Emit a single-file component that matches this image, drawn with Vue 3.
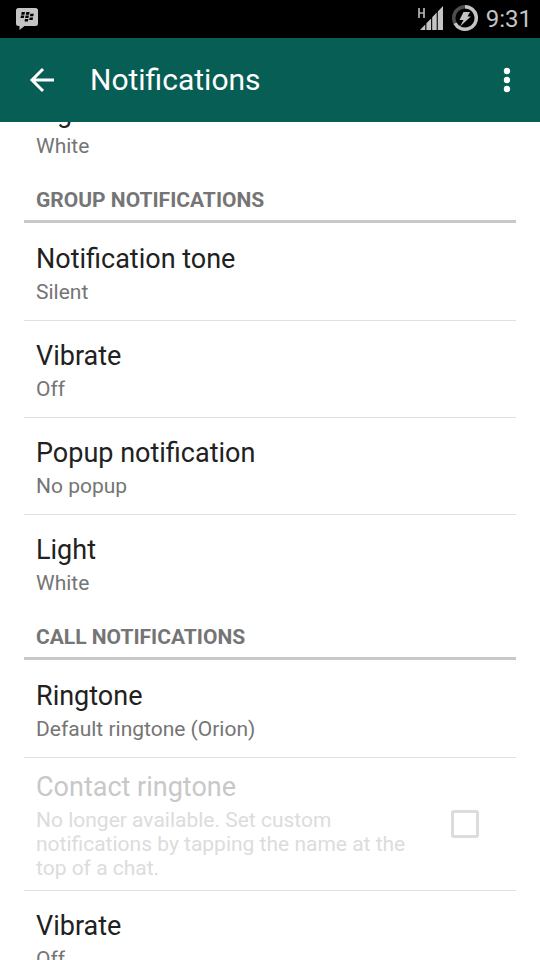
<script setup>
const sections = [
  {
    id: 'message',
    title: '',
    items: [{ id: 'message-light', title: 'Light', summary: 'White' }],
  },
  {
    id: 'group',
    title: 'Group notifications',
    items: [
      { id: 'group-tone', title: 'Notification tone', summary: 'Silent' },
      { id: 'group-vibrate', title: 'Vibrate', summary: 'Off' },
      { id: 'group-popup', title: 'Popup notification', summary: 'No popup' },
      { id: 'group-light', title: 'Light', summary: 'White' },
    ],
  },
  {
    id: 'call',
    title: 'Call notifications',
    items: [
      { id: 'call-ringtone', title: 'Ringtone', summary: 'Default ringtone (Orion)' },
      {
        id: 'call-contact',
        title: 'Contact ringtone',
        summary:
          'No longer available. Set custom notifications by tapping the name at the top of a chat.',
        checkbox: true,
      },
      { id: 'call-vibrate', title: 'Vibrate', summary: 'Off' },
    ],
  },
]
</script>

<template>
  <div class="screen">
    <div class="status">
      <svg width="24" height="24" viewBox="0 0 24 24" aria-hidden="true">
        <path fill="#c4c4c4" d="M3.500 1h17a2.500 2.500 0 0 1 2.500 2.500v13a2.500 2.500 0 0 1-2.500 2.500H9.500L4.500 23V19h-1A2.500 2.500 0 0 1 1 16.500v-13A2.500 2.500 0 0 1 3.500 1z" />
        <path fill="#000" d="M6.700 5h3.300l-.5 2.700H6.200zM11.300 5h3.300l-.5 2.700h-3.300zM6 8.500h3.300l-.5 2.600H5.500zM10.600 8.500h3.300l-.5 2.600h-3.300zM15.400 6.700h3.400l-.5 2.600h-3.400zM14.700 10.500h3.400l-.5 2.600h-3.400zM10 12h3.400l-.5 2.600H9.500z" />
      </svg>
      <div class="tray">
        <svg width="27" height="26" viewBox="0 0 27 26" aria-hidden="true">
          <path fill="none" stroke="#b4b4b4" stroke-width="1.700" d="M2 2v10M7 2v10M2 7h5" />
          <path fill="#c4c4c4" d="M3 24l5.300-5.500V24zM9.400 17.300l4.700-4.900V24H9.400zM15.200 11.300l4.500-4.700V24h-4.500zM20.800 5.400L26 0v24h-5.200z" />
        </svg>
        <svg width="28" height="28" viewBox="0 0 28 28" aria-hidden="true">
          <circle cx="14" cy="13" r="11.300" fill="none" stroke="#4d4d4d" stroke-width="3.400" />
          <path fill="none" stroke="#c4c4c4" stroke-width="3.400" d="M14 1.700a11.300 11.300 0 1 1-10 16.500" />
          <path fill="#c4c4c4" d="M12.500 7H19l-2.500 4.500h3.300L9 21.500l3.500-6.500H8.500z" />
        </svg>
        <time class="clock">9:31</time>
      </div>
    </div>

    <header class="bar">
      <button class="icon-button" type="button" aria-label="Back">
        <svg width="28" height="28" viewBox="0 0 28 28" aria-hidden="true">
          <path fill="none" stroke="#fff" stroke-width="3" d="M26 14H4M15 3L4 14l11 11" />
        </svg>
      </button>
      <h1>Notifications</h1>
      <button class="icon-button more" type="button" aria-label="More options">
        <svg width="8" height="26" viewBox="0 0 8 26" aria-hidden="true">
          <g fill="#fff">
            <circle cx="4" cy="4" r="3.200" />
            <circle cx="4" cy="13" r="3.200" />
            <circle cx="4" cy="22" r="3.200" />
          </g>
        </svg>
      </button>
    </header>

    <main class="viewport">
      <div class="list">
        <section v-for="section in sections" :key="section.id">
          <h2 v-if="section.title">{{ section.title }}</h2>
          <ul>
            <li v-for="item in section.items" :key="item.id">
              <label v-if="item.checkbox" class="row disabled" :for="item.id">
                <span class="text">
                  <span class="title">{{ item.title }}</span>
                  <span class="summary">{{ item.summary }}</span>
                </span>
                <input :id="item.id" type="checkbox" disabled />
              </label>
              <button v-else class="row" type="button">
                <span class="text">
                  <span class="title">{{ item.title }}</span>
                  <span class="summary">{{ item.summary }}</span>
                </span>
              </button>
            </li>
          </ul>
        </section>
      </div>
    </main>
  </div>
</template>

<style>
body {
  margin: 0;
  background: #fff;
}
</style>

<style scoped>
.screen {
  display: flex;
  flex-direction: column;
  height: 100vh;
  overflow: hidden;
  font-family: Roboto, "Liberation Sans", sans-serif;
  color: #212121;
}
.status {
  flex: none;
  display: flex;
  align-items: center;
  justify-content: space-between;
  height: 38px;
  padding: 0 8px 0 15px;
  background: #000;
  color: #c4c4c4;
}
.tray {
  display: flex;
  align-items: center;
  gap: 7px;
}
.clock {
  font-size: 24px;
  line-height: 38px;
}
.bar {
  flex: none;
  display: flex;
  align-items: center;
  height: 84px;
  padding: 0 12px;
  background: #075e54;
  color: #fff;
}
button {
  border: 0;
  padding: 0;
  background: none;
  color: inherit;
  font: inherit;
  text-align: left;
}
.icon-button {
  display: flex;
  align-items: center;
  justify-content: center;
  width: 60px;
  height: 60px;
}
.more {
  width: 42px;
}
h1 {
  flex: 1;
  margin: 0;
  padding-left: 18px;
  font-size: 30px;
  line-height: 36px;
  font-weight: 400;
}
.viewport {
  flex: 1;
  min-height: 0;
  overflow: hidden;
}
/* The list is scrolled so that its first row sits partly under the bar. */
.list {
  margin: -44px 24px 0;
}
h2 {
  margin: 0 0 1px;
  padding: 12px 12px 6px;
  border-bottom: 3px solid #c8c8c8;
  font-size: 21px;
  line-height: 28px;
  font-weight: 700;
  text-transform: uppercase;
  color: #757575;
}
ul {
  margin: 0;
  padding: 0;
  list-style: none;
}
li + li {
  border-top: 1px solid #e0e0e0;
}
.row {
  display: flex;
  align-items: center;
  box-sizing: border-box;
  width: 100%;
  min-height: 96px;
  padding: 0 12px;
}
.text {
  flex: 1;
  display: flex;
  flex-direction: column;
  gap: 5px;
  padding: 13px 0 10px;
}
.title {
  font-size: 27px;
  line-height: 32px;
}
.summary {
  font-size: 21px;
  line-height: 24px;
  color: #757575;
}
.disabled .title {
  color: #c8c8c8;
}
.disabled .summary {
  color: #dcdcdc;
}
input {
  appearance: none;
  flex: none;
  box-sizing: border-box;
  width: 28px;
  height: 28px;
  margin: 0 25px 0 36px;
  border: 3px solid #dcdcdc;
  border-radius: 3px;
}
</style>
